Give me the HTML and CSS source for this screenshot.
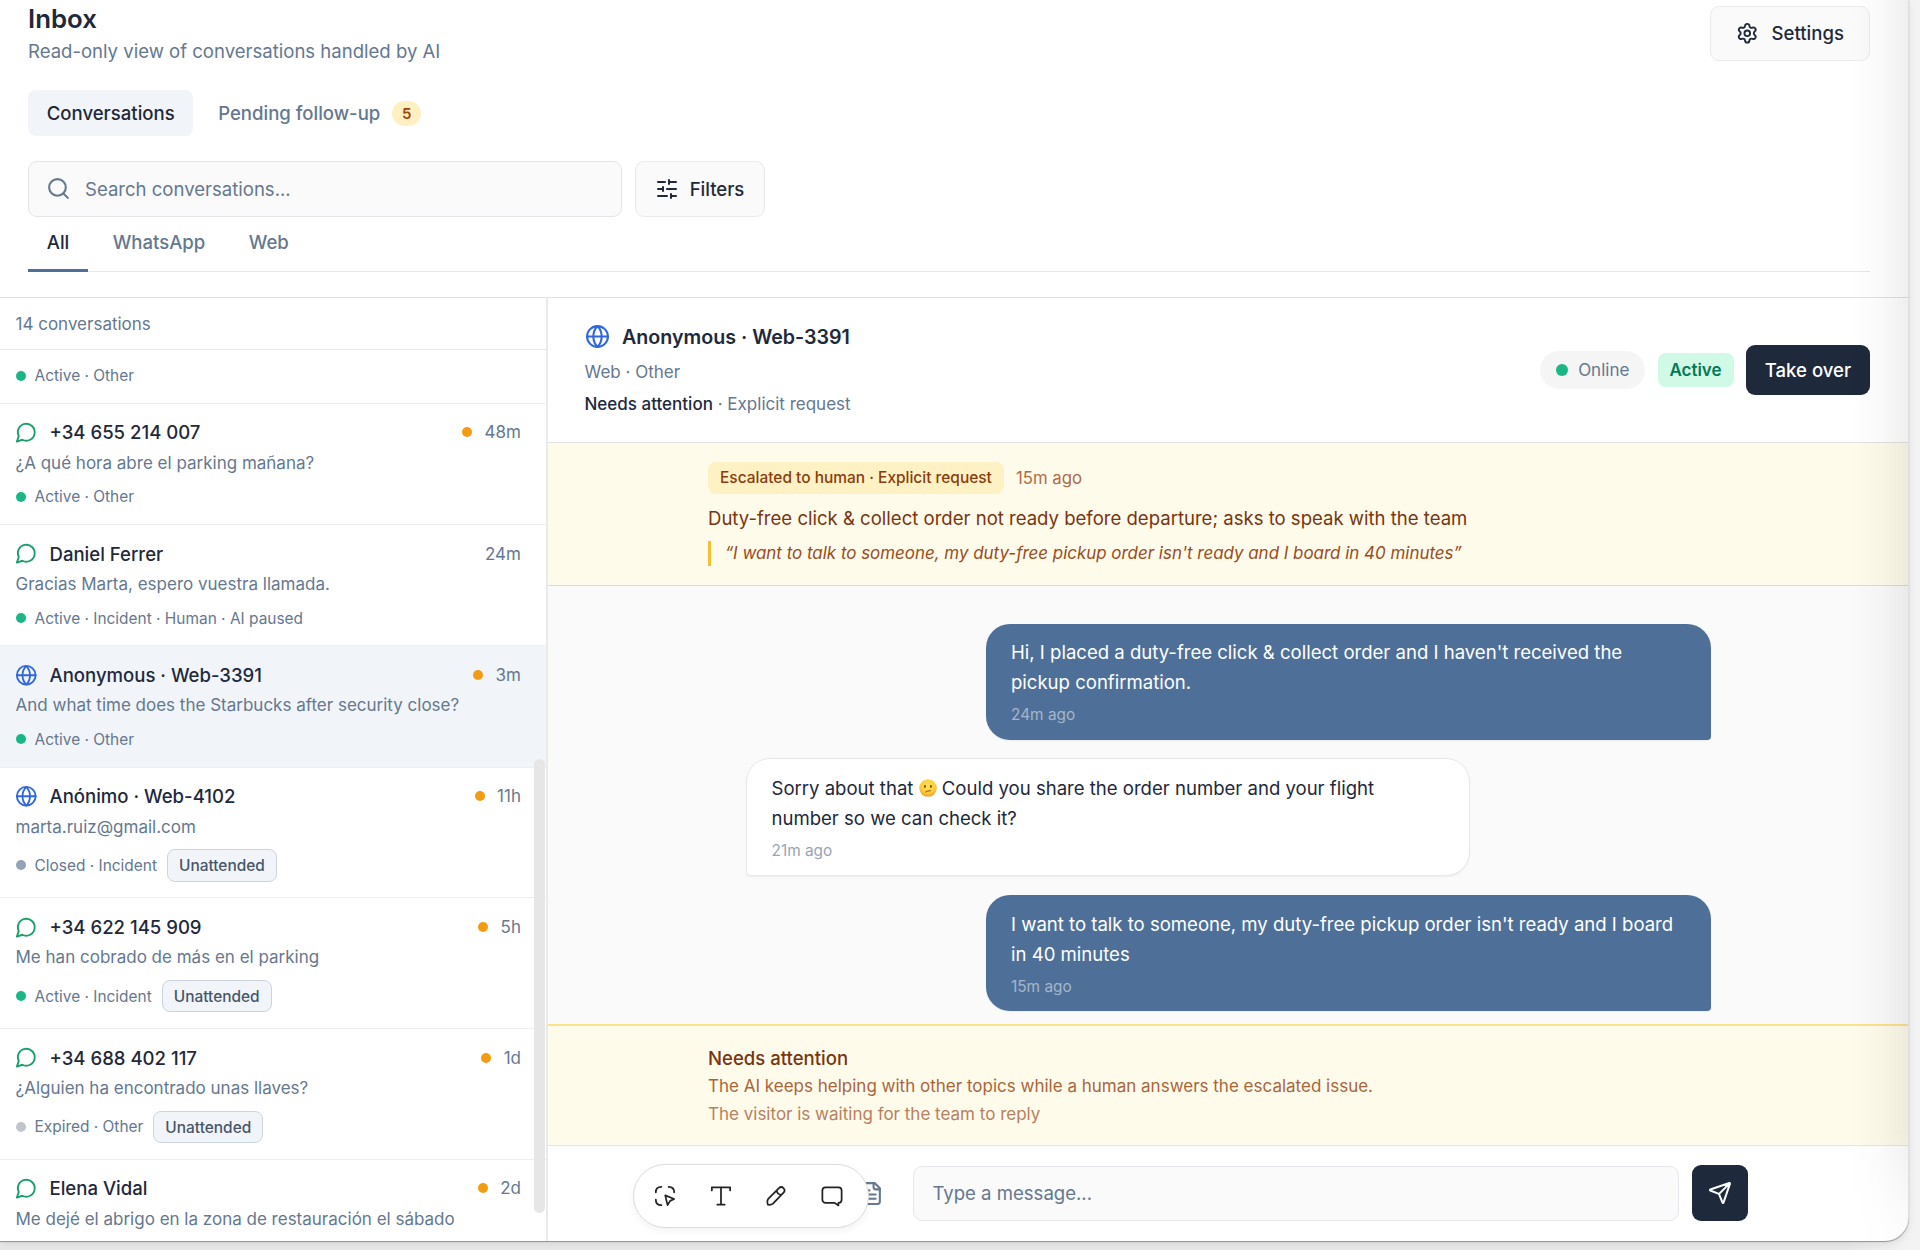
FILE: index.html
```html
<!DOCTYPE html>
<html lang="en">
<head>
<meta charset="utf-8">
<title>Inbox</title>
<link rel="stylesheet" href="styles.css">
</head>
<body>
<svg width="0" height="0" class="sprite" aria-hidden="true">
  <symbol id="globe" viewBox="0 0 24 24"><circle cx="12" cy="12" r="10"/><path d="M12 2a14.5 14.5 0 0 0 0 20 14.5 14.5 0 0 0 0-20M2 12h20"/></symbol>
  <symbol id="chat" viewBox="0 0 24 24"><path d="M7.9 20A9 9 0 1 0 4 16.1L2 22Z"/></symbol>
</svg>
<div class="window">
  <header class="top">
    <div class="top-row">
      <div>
        <h1 class="title">Inbox</h1>
        <p class="subtitle">Read-only view of conversations handled by AI</p>
      </div>
      <button class="btn settings"><svg class="ic i22" viewBox="0 0 24 24"><path d="M9.671 4.136a2.34 2.34 0 0 1 4.659 0 2.34 2.34 0 0 0 3.319 1.915 2.34 2.34 0 0 1 2.33 4.033 2.34 2.34 0 0 0 0 3.831 2.34 2.34 0 0 1-2.33 4.033 2.34 2.34 0 0 0-3.319 1.915 2.34 2.34 0 0 1-4.659 0 2.34 2.34 0 0 0-3.32-1.915 2.34 2.34 0 0 1-2.33-4.033 2.34 2.34 0 0 0 0-3.831A2.34 2.34 0 0 1 6.35 6.051a2.34 2.34 0 0 0 3.319-1.915"/><circle cx="12" cy="12" r="3"/></svg>Settings</button>
    </div>
    <nav class="views">
      <a class="view on">Conversations</a>
      <a class="view">Pending follow-up<span class="count">5</span></a>
    </nav>
    <div class="tools">
      <div class="search"><svg class="ic i25" viewBox="0 0 24 24"><circle cx="11" cy="11" r="8"/><path d="m21 21-4.3-4.3"/></svg>Search conversations...</div>
      <button class="btn filters"><svg class="ic i24" viewBox="0 0 24 24"><path d="M10 5H3M12 19H3M14 3v4M16 17v4M21 12h-9M21 19h-5M21 5h-7M8 10v4M8 12H3"/></svg>Filters</button>
    </div>
    <nav class="channels">
      <a class="channel on">All</a>
      <a class="channel">WhatsApp</a>
      <a class="channel">Web</a>
    </nav>
  </header>
  <main class="split">
    <aside class="list">
      <div class="list-head">14 conversations</div>
      <div class="rows">
        <article class="row cut"><div class="status"><i class="dot green"></i>Active · Other</div></article>
        <article class="row">
          <div class="name"><svg class="ic i22 wa"><use href="#chat"/></svg><b>+34 655 214 007</b><i class="dot amber"></i><time>48m</time></div>
          <p class="preview">¿A qué hora abre el parking mañana?</p>
          <div class="status"><i class="dot green"></i>Active · Other</div>
        </article>
        <article class="row">
          <div class="name"><svg class="ic i22 wa"><use href="#chat"/></svg><b>Daniel Ferrer</b><time>24m</time></div>
          <p class="preview">Gracias Marta, espero vuestra llamada.</p>
          <div class="status"><i class="dot green"></i>Active · Incident · Human · AI paused</div>
        </article>
        <article class="row selected">
          <div class="name"><svg class="ic i22 web"><use href="#globe"/></svg><b>Anonymous · Web-3391</b><i class="dot amber"></i><time>3m</time></div>
          <p class="preview">And what time does the Starbucks after security close?</p>
          <div class="status"><i class="dot green"></i>Active · Other</div>
        </article>
        <article class="row">
          <div class="name"><svg class="ic i22 web"><use href="#globe"/></svg><b>Anónimo · Web-4102</b><i class="dot amber"></i><time>11h</time></div>
          <p class="preview">marta.ruiz@gmail.com</p>
          <div class="status"><i class="dot slate"></i>Closed · Incident<span class="tag">Unattended</span></div>
        </article>
        <article class="row">
          <div class="name"><svg class="ic i22 wa"><use href="#chat"/></svg><b>+34 622 145 909</b><i class="dot amber"></i><time>5h</time></div>
          <p class="preview">Me han cobrado de más en el parking</p>
          <div class="status"><i class="dot green"></i>Active · Incident<span class="tag">Unattended</span></div>
        </article>
        <article class="row">
          <div class="name"><svg class="ic i22 wa"><use href="#chat"/></svg><b>+34 688 402 117</b><i class="dot amber"></i><time>1d</time></div>
          <p class="preview">¿Alguien ha encontrado unas llaves?</p>
          <div class="status"><i class="dot grey"></i>Expired · Other<span class="tag">Unattended</span></div>
        </article>
        <article class="row">
          <div class="name"><svg class="ic i22 wa"><use href="#chat"/></svg><b>Elena Vidal</b><i class="dot amber"></i><time>2d</time></div>
          <p class="preview">Me dejé el abrigo en la zona de restauración el sábado</p>
        </article>
      </div>
      <div class="scrollbar"></div>
    </aside>
    <section class="chat">
      <header class="chat-head">
        <div>
          <h2 class="who"><svg class="ic i25 web"><use href="#globe"/></svg>Anonymous · Web-3391</h2>
          <p class="meta">Web · Other</p>
          <p class="meta"><strong>Needs attention</strong> · Explicit request</p>
        </div>
        <div class="actions">
          <span class="online"><i class="dot green"></i>Online</span>
          <span class="active">Active</span>
          <button class="take">Take over</button>
        </div>
      </header>
      <div class="escalation">
        <div class="lane">
          <div class="esc-top"><span class="reason">Escalated to human · Explicit request</span><span class="ago">15m ago</span></div>
          <p class="summary">Duty-free click &amp; collect order not ready before departure; asks to speak with the team</p>
          <blockquote class="quote">“I want to talk to someone, my duty-free pickup order isn't ready and I board in 40 minutes”</blockquote>
        </div>
      </div>
      <div class="messages">
        <div class="lane thread">
          <div class="bubble out"><p>Hi, I placed a duty-free click &amp; collect order and I haven't received the pickup confirmation.</p><time>24m ago</time></div>
          <div class="bubble in"><p>Sorry about that <svg class="emoji" viewBox="0 0 20 20" role="img" aria-label="confused face"><defs><radialGradient id="face" cx=".5" cy=".35" r=".65"><stop offset="0" stop-color="#ffe15a"/><stop offset=".7" stop-color="#fdc936"/><stop offset="1" stop-color="#f0982a"/></radialGradient></defs><circle cx="10" cy="10" r="9.7" fill="url(#face)"/><ellipse cx="6.6" cy="8.200" rx="1.1" ry="1.4" fill="#7a4a12"/><ellipse cx="13.2" cy="8.200" rx="1.1" ry="1.4" fill="#7a4a12"/><path d="M7.3 14.400q2.2-1.600 5.4-1.400" fill="none" stroke="#7a4a12" stroke-width="1" stroke-linecap="round"/></svg> Could you share the order number and your flight number so we can check it?</p><time>21m ago</time></div>
          <div class="bubble out"><p>I want to talk to someone, my duty-free pickup order isn't ready and I board in 40 minutes</p><time>15m ago</time></div>
        </div>
      </div>
      <div class="attention">
        <div class="lane">
          <p class="att-title">Needs attention</p>
          <p class="att-text">The AI keeps helping with other topics while a human answers the escalated issue.</p>
          <p class="att-text soft">The visitor is waiting for the team to reply</p>
        </div>
      </div>
      <footer class="composer">
        <div class="lane compose-row">
          <svg class="ic i25 doc" viewBox="0 0 24 24"><path d="M15 2H6a2 2 0 0 0-2 2v16a2 2 0 0 0 2 2h12a2 2 0 0 0 2-2V7Z"/><path d="M14 2v4a2 2 0 0 0 2 2h4M10 9H8M16 13H8M16 17H8"/></svg>
          <div class="field">Type a message...</div>
          <button class="send"><svg class="ic i24" viewBox="0 0 24 24"><path d="M14.536 21.686a.5.5 0 0 0 .937-.024l6.5-19a.496.496 0 0 0-.635-.635l-19 6.5a.5.5 0 0 0-.024.937l7.93 3.18a2 2 0 0 1 1.112 1.11zM21.854 2.147l-10.94 10.939"/></svg></button>
        </div>
      </footer>
    </section>
  </main>
  <div class="edge-shade"></div>
</div>
<div class="palette">
  <svg viewBox="0 0 24 24"><path d="M2 8Q2 2 8 2M16 2Q22 2 22 8M2 16Q2 22 8 22"/><path d="M12.300 11.300 22 15.300 17.600 17.300 14.800 22Z"/></svg>
  <svg viewBox="0 0 24 24"><path d="M2 6V2.500h20V6M12 2.500v19M8 21.500h8"/></svg>
  <svg viewBox="0 0 24 24"><path d="M3.500 15.200 15.200 3.500a3.400 3.400 0 0 1 5 4.800L8.700 20.300Q6.800 22 3.200 21.500 1.800 17.500 3.500 15.200ZM12.800 6q.5 4 4.800 4.800"/></svg>
  <svg viewBox="0 0 24 24"><path d="M5 2.500h14A3.500 3.500 0 0 1 22.500 6v10a3.500 3.500 0 0 1-3.500 3.500V22.300l-4-2.800H5A3.500 3.500 0 0 1 1.500 16V6A3.500 3.500 0 0 1 5 2.500Z"/></svg>
</div>
</body>
</html>
```
FILE: styles.css
```css
* { box-sizing: border-box; margin: 0; padding: 0; }
html, body { height: 1250px; overflow: hidden; }
body {
  position: relative;
  background: linear-gradient(to right, #e8e8e8 96%, #f3f3f3 99.5%);
  font-family: Inter, "Noto Sans", sans-serif;
  font-size: 18.56px;
  color: #1e293b;
}
button { font: inherit; color: inherit; border: 0; }
i, time { font-style: normal; }
.sprite { position: absolute; }
.ic { flex: none; fill: none; stroke: currentColor; stroke-width: 2; stroke-linecap: round; stroke-linejoin: round; }
.i22 { width: 22.5px; height: 22.5px; }
.i24 { width: 24px; height: 24px; }
.i25 { width: 25px; height: 25px; }
.web { color: #2f67dd; }
.wa { color: #1a9f69; }

.window {
  position: relative;
  display: flex;
  flex-direction: column;
  width: 1909px;
  height: 1241px;
  background: #fff;
  border-right: 1px solid #dedfe0;
  border-bottom-right-radius: 24px;
  overflow: hidden;
  box-shadow: 0 1px 1px rgba(0,0,0,.35), 0 3px 8px rgba(0,0,0,.08);
}
.edge-shade {
  position: absolute;
  inset: 0 0 0 auto;
  width: 56px;
  background: linear-gradient(to right, rgba(0,0,0,0), rgba(0,0,0,.018) 50%, rgba(0,0,0,.062));
  mask-image: linear-gradient(#000 1130px, rgba(0,0,0,.2) 1225px);
}

.top { padding: 2px 38px 25px 28px; border-bottom: 1px solid #e0e2e4; height: 298px; flex: none; }
.top-row { display: flex; justify-content: space-between; height: 88px; }
.title { font-size: 25.8px; line-height: 34px; font-weight: 600; }
.subtitle { line-height: 30px; color: #64788f; }
.btn {
  display: flex; align-items: center; justify-content: center;
  height: 55px; border: 1px solid #e8eaec; border-radius: 9px;
  background: #fafafa; font-weight: 500;
}
.settings { width: 160px; gap: 13px; margin-top: 3.5px; }
.views { display: flex; gap: 6px; }
.view { display: flex; align-items: center; height: 46px; padding: 0 18.75px; border-radius: 8px; font-weight: 500; color: #64788f; }
.view.on { background: #f1f5f9; color: #1e293b; }
.count { margin-left: 12px; width: 29px; height: 25px; line-height: 25px; border-radius: 13px; background: #fef0c0; color: #a0410d; font-size: 15px; font-weight: 600; text-align: center; }
.tools { display: flex; gap: 12.5px; margin-top: 25px; }
.search { display: flex; align-items: center; gap: 14px; width: 594px; height: 55.5px; padding-left: 17px; border: 1px solid #e3e5e8; border-radius: 9px; background: #fafafa; color: #64788f; }
.filters { width: 130px; gap: 11px; height: 55.5px; }
.channels { display: flex; gap: 6px; height: 55px; border-bottom: 1px solid #e5e7ea; }
.channel { height: 55px; padding: 0 18.75px; line-height: 51px; font-weight: 500; color: #64788f; border-bottom: 3px solid transparent; }
.channel.on { color: #1e293b; border-color: #4e7098; }

.split { display: flex; flex: 1; min-height: 0; }
.list { position: relative; display: flex; flex-direction: column; width: 548px; flex: none; border-right: 2px solid #e9eaec; }
.list-head { flex: none; height: 52px; line-height: 52px; padding-left: 15.5px; border-bottom: 1px solid #e3e5e8; font-size: 17px; color: #64788f; }
.rows { flex: 1; min-height: 0; overflow: hidden; }
.row { padding: 15px 25px 15.75px 15.5px; border-bottom: 1px solid #eceef0; }
.row.cut { padding-top: 14.2px; }
.row.cut .status { margin-top: 0; }
.row.selected { background: #f1f5f9; }
.name { display: flex; align-items: center; height: 27px; }
.name .ic { margin-left: -1px; }
.name b { font-weight: 500; margin-left: 12.5px; margin-right: auto; }
.name time { font-size: 17px; color: #64788f; margin-left: 12.5px; }
.preview { font-size: 17px; line-height: 34px; height: 30px; color: #64788f; white-space: nowrap; }
.status { display: flex; align-items: center; min-height: 23px; margin-top: 9.5px; font-size: 15.45px; color: #64788f; }
.dot { flex: none; width: 10px; height: 10px; border-radius: 50%; }
.status .dot { margin-right: 9px; }
.green { background: #18b785; }
.amber { background: #f39c12; }
.slate { background: #94a3b8; }
.grey { background: #c0c5cc; }
.tag { margin-left: 10px; height: 32.5px; line-height: 31px; padding: 0 11px; border: 1px solid #cbd3df; border-radius: 8px; background: #f1f5f9; color: #475569; font-weight: 500; }
.scrollbar { position: absolute; left: 534px; top: 461px; width: 10.5px; height: 454px; border-radius: 6px; background: #e6e6e6; }

.chat { flex: 1; min-width: 0; display: flex; flex-direction: column; }
.chat-head { flex: none; display: flex; justify-content: space-between; align-items: center; height: 145px; padding: 0 38px 0 36.5px; border-bottom: 1px solid #e0e2e4; }
.who { display: flex; align-items: center; gap: 12.5px; height: 32px; font-size: 19.65px; font-weight: 600; }
.meta { font-size: 17px; line-height: 32px; color: #64788f; }
.who + .meta { margin-top: 3px; }
.meta strong { font-weight: 500; color: #1e293b; }
.actions { display: flex; align-items: center; gap: 12.5px; }
.online { display: flex; align-items: center; justify-content: center; gap: 10px; width: 105px; height: 38px; border-radius: 19px; background: #f5f5f5; color: #64788f; font-size: 17px; }
.online .dot { width: 12.5px; height: 12.5px; }
.active { width: 76px; height: 34.5px; line-height: 34.5px; text-align: center; border-radius: 8px; background: #d0fae5; color: #047857; font-size: 17px; font-weight: 600; }
.take { width: 124px; height: 49.5px; border-radius: 9px; background: #1e293b; color: #fff; font-weight: 500; }

.lane { width: 1040px; margin: 0 auto; }
.escalation { flex: none; height: 143px; padding-top: 19px; background: #fffbeb; border-bottom: 1px solid #f5df85; }
.esc-top { display: flex; align-items: center; gap: 12px; }
.reason { height: 32px; line-height: 32px; padding: 0 12px; border-radius: 8px; background: #fef1c3; color: #8a3c0e; font-size: 15.48px; font-weight: 500; }
.ago { font-size: 16.8px; color: #b06a45; }
.summary { margin-top: 9px; line-height: 30px; color: #78350f; }
.quote { margin-top: 8px; height: 25px; line-height: 25px; padding-left: 14px; border-left: 3px solid #f5c030; font-size: 16.93px; font-style: italic; color: #9a4b22; }

.messages { flex: 1; min-height: 0; background: #fafafa; padding-top: 37.6px; overflow: hidden; }
.thread { display: flex; flex-direction: column; gap: 18.9px; padding: 0 37.5px; }
.bubble { width: 724.5px; padding: 13.4px 25px 14.6px; border-radius: 24px; box-shadow: 0 1px 2px rgba(0,0,0,.06); }
.bubble p { line-height: 30px; }
.bubble time { display: block; margin-top: 8px; line-height: 20px; font-size: 15.4px; }
.out { align-self: flex-end; background: #4e7098; color: #fff; border-bottom-right-radius: 4px; }
.out time { color: #a5b6cb; }
.in { background: #fff; border: 1px solid #e6e8ea; border-bottom-left-radius: 4px; }
.in time { color: #98a4b4; }
.emoji { width: 18px; height: 18px; vertical-align: -2.5px; }

.attention { flex: none; height: 122px; padding-top: 18px; background: #fffbeb; border-top: 2px solid #fbe38a; border-bottom: 1px solid #e5e5e0; }
.attention p { line-height: 28px; }
.att-title { font-weight: 500; color: #78350f; }
.att-text { font-size: 17px; color: #a8653c; }
.soft { color: #b77f60; }
.composer { flex: none; height: 95px; padding-top: 19px; }
.compose-row { display: flex; align-items: center; }
.doc { margin-left: 151px; color: #64788f; }
.field { margin-left: 28.5px; width: 766.5px; height: 55px; line-height: 53px; padding-left: 19px; border: 1px solid #e5e7ea; border-radius: 9px; background: #fafafa; color: #64788f; }
.send { display: flex; align-items: center; justify-content: center; margin-left: 12.5px; width: 56px; height: 56px; border-radius: 9px; background: #1e293b; color: #fff; }

.palette {
  position: absolute; left: 633px; top: 1164px; width: 236px; height: 64px;
  display: flex; align-items: center; justify-content: space-between; padding: 0 25px 0 20px;
  border: 1px solid #dcdcdc; border-radius: 32px; background: #fff; box-shadow: 0 3px 8px rgba(0,0,0,.05);
}
.palette svg { width: 22px; height: 22px; fill: none; stroke: #222; stroke-width: 1.9; stroke-linecap: round; stroke-linejoin: round; }
```
